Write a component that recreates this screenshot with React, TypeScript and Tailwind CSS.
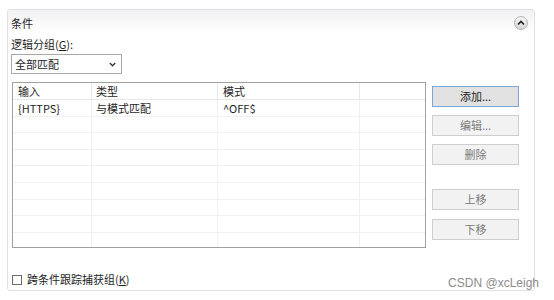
import React from 'react';

const cjk = { fontFamily: '"Microsoft YaHei", "Noto Sans CJK SC", "Noto Sans", sans-serif' };

const rows = [
  ['{HTTPS}', '与模式匹配', '^OFF$'],
  ['', '', ''],
  ['', '', ''],
  ['', '', ''],
  ['', '', ''],
  ['', '', ''],
  ['', '', ''],
  ['', '', ''],
  ['', '', ''],
];

function Btn({ label, primary, className = '' }: { label: string; primary?: boolean; className?: string }) {
  return (
    <div
      className={
        'w-[87px] h-[21px] flex items-center justify-center text-[11px] leading-none ' +
        (primary
          ? 'border border-[#7aa7d8] bg-[#e1e1e1] text-[#222]'
          : 'border border-[#cdcdcd] bg-[#f2f2f2] text-[#7a7a7a]') +
        ' ' +
        className
      }
    >
      {label}
    </div>
  );
}

export default function App() {
  return (
    <div className="relative w-[554px] h-[300px] bg-white pt-[9px] pl-[7px] overflow-hidden" style={cjk}>
      {/* Panel */}
      <div className="w-[528px] h-[282px] border border-[#dde1e6] rounded-[3px] flex flex-col">
        {/* Header */}
        <div className="h-[24px] flex items-center justify-between pl-[3px] pr-[6px] bg-gradient-to-b from-[#f1f1f1] to-white">
          <span className="text-[11px] text-[#1e1e1e] pt-[2px]">条件</span>
          <div className="w-[14px] h-[14px] rounded-full border border-[#b5b5b5] bg-gradient-to-b from-[#f4f4f4] to-[#d6d6d6] flex items-center justify-center mt-[1px]">
            <svg width="8" height="6" viewBox="0 0 8 6">
              <path d="M1 4.5 L4 1.5 L7 4.5" stroke="#222" strokeWidth="1.6" fill="none" />
            </svg>
          </div>
        </div>

        {/* Body */}
        <div className="flex flex-col pl-[3px] pt-[4px]">
          <div className="text-[11px] text-[#1e1e1e] leading-[13px]">
            逻辑分组(<span className="underline">G</span>):
          </div>
          <div className="mt-[3px] w-[111px] h-[20px] border border-[#a9a9a9] bg-white flex items-center justify-between pl-[3px] pr-[5px]">
            <span className="text-[11px] text-[#1e1e1e]">全部匹配</span>
            <svg width="7" height="5" viewBox="0 0 7 5">
              <path d="M0.8 1 L3.5 3.8 L6.2 1" stroke="#333" strokeWidth="1.3" fill="none" />
            </svg>
          </div>

          <div className="flex mt-[8px]">
            {/* Table */}
            <div className="ml-[1px] w-[414px] h-[166px] border border-[#a0a0a0] bg-white overflow-hidden">
              <div className="flex h-[17px] border-b border-[#e8e8e8] text-[11px] text-[#1e1e1e]">
                <div className="w-[79px] border-r border-[#e8e8e8] pl-[5px] leading-[16px]">输入</div>
                <div className="w-[126px] border-r border-[#e8e8e8] pl-[4px] leading-[16px]">类型</div>
                <div className="w-[142px] border-r border-[#e8e8e8] pl-[5px] leading-[16px]">模式</div>
                <div className="flex-1" />
              </div>
              {rows.map((r, i) => (
                <div key={i} className="flex h-[16.6px] border-b border-[#f0f0f0] text-[11px] text-[#1e1e1e]">
                  <div className="w-[79px] border-r border-[#f0f0f0] pl-[5px] leading-[16px]">{r[0]}</div>
                  <div className="w-[126px] border-r border-[#f0f0f0] pl-[4px] leading-[16px]">{r[1]}</div>
                  <div className="w-[142px] border-r border-[#f0f0f0] pl-[5px] leading-[16px]">{r[2]}</div>
                  <div className="flex-1" />
                </div>
              ))}
            </div>

            {/* Buttons */}
            <div className="flex flex-col ml-[6px] pt-[4px]">
              <Btn label="添加..." primary />
              <Btn label="编辑..." className="mt-[8px]" />
              <Btn label="删除" className="mt-[8px]" />
              <Btn label="上移" className="mt-[24px]" />
              <Btn label="下移" className="mt-[9px]" />
            </div>
          </div>

          <div className="flex items-center mt-[26px] ml-[1px]">
            <div className="w-[10px] h-[10px] border border-[#6a6a6a] bg-white" />
            <span className="ml-[5px] text-[11px] text-[#1e1e1e] leading-none">
              跨条件跟踪捕获组(<span className="underline">K</span>)
            </span>
          </div>
        </div>
      </div>

      <div
        className="absolute right-[15px] bottom-[11px] text-[12px] text-[#8b8b8b] leading-none"
        style={{ fontFamily: '"Liberation Sans", Arial, sans-serif' }}
      >
        CSDN @xcLeigh
      </div>
    </div>
  );
}
